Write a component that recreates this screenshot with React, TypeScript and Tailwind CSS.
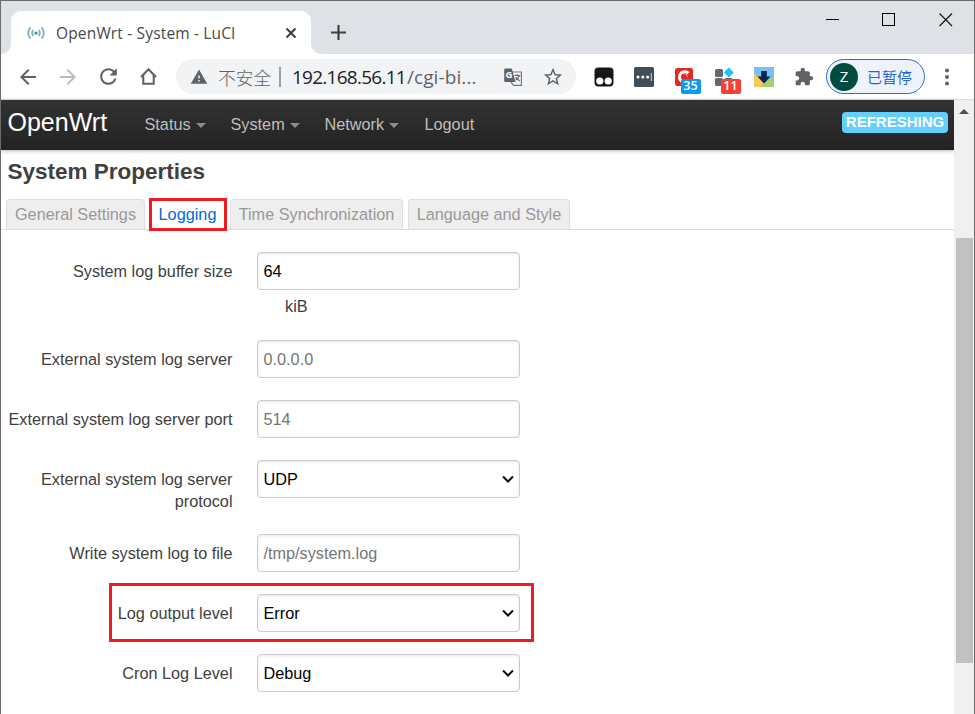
import type { ReactNode } from "react";

const uiFont = "font-['Open_Sans','Noto_Sans_CJK_SC',sans-serif]";

function Glyph({ d, className = "size-6" }: { d: string; className?: string }) {
  return (
    <svg viewBox="0 0 24 24" className={className} fill="currentColor">
      <path d={d} />
    </svg>
  );
}

function Cell({ children }: { children: ReactNode }) {
  return <div className="flex h-9 w-10 shrink-0 items-center justify-center text-[#5f6368]">{children}</div>;
}

function TabStrip() {
  return (
    <div className="flex h-[53px] shrink-0 items-end bg-[#dee1e6]">
      <div className="flex h-[43px] w-[320px] shrink-0 items-end">
        <div className="h-2.5 w-2.5 shrink-0 bg-white">
          <div className="h-2.5 w-2.5 rounded-br-[10px] bg-[#dee1e6]" />
        </div>
        <div className="flex h-[43px] w-[300px] shrink-0 items-center rounded-t-[10px] bg-white pl-[16px]">
          <svg viewBox="0 0 18 14" className="h-[14px] w-[18px] shrink-0" fill="none" stroke="#7fb0c2" strokeWidth="1.8">
            <circle cx="9" cy="7" r="1.6" fill="#46869f" stroke="none" />
            <path d="M6.4 4.2Q4 7 6.4 9.8M11.6 4.2Q14 7 11.6 9.8M3.4 1.4Q-1 7 3.4 12.6M14.6 1.4Q19 7 14.6 12.6" />
          </svg>
          <span className={`${uiFont} ml-[11px] w-[200px] shrink-0 whitespace-nowrap text-[15.5px] leading-5 tracking-[0.16px] text-[#45494d]`}>
            OpenWrt - System - LuCI
          </span>
          <svg viewBox="0 0 12 12" className="ml-[29px] size-3 shrink-0" stroke="#3c4043" strokeWidth="2" fill="none">
            <path d="M1.5 1.5l9 9M10.5 1.5l-9 9" />
          </svg>
        </div>
        <div className="h-2.5 w-2.5 shrink-0 bg-white">
          <div className="h-2.5 w-2.5 rounded-bl-[10px] bg-[#dee1e6]" />
        </div>
      </div>
      <svg viewBox="0 0 14 14" className="mb-[14px] ml-[10px] size-[15px] shrink-0" stroke="#3c4043" strokeWidth="2" fill="none">
        <path d="M7 0v14M0 7h14" />
      </svg>
      <div className="ml-auto flex h-full items-start pt-[12px] pr-[21px]">
        <svg viewBox="0 0 14 14" className="mr-[42px] size-[14px]" shapeRendering="crispEdges">
          <rect x="0" y="6" width="13" height="1" fill="#000" />
        </svg>
        <svg viewBox="0 0 14 14" className="mr-[43px] size-[14px]" shapeRendering="crispEdges">
          <rect x="0.5" y="0.5" width="12" height="12" fill="none" stroke="#000" />
        </svg>
        <svg viewBox="0 0 14 14" className="size-[14px]">
          <path d="M.5.5l12.5 12.5M13 .5L.5 13" fill="none" stroke="#111" strokeWidth="1.1" />
        </svg>
      </div>
    </div>
  );
}

function Omnibox() {
  return (
    <div className={`${uiFont} ml-2 flex h-[35px] w-[400px] shrink-0 items-center rounded-full bg-[#f1f3f4]`}>
      <Glyph
        className="ml-[14px] size-[18px] shrink-0 text-[#5f6368]"
        d="M1 21h22L12 2 1 21zm12-3h-2v-2h2v2zm0-4h-2v-4h2v4z"
      />
      <span className="ml-[10px] w-[53px] whitespace-nowrap font-['Noto_Sans_CJK_SC',sans-serif] text-[17.7px] leading-6 font-light text-[#5f6368]">
        不安全
      </span>
      <span className="ml-[8px] h-[20px] w-[2px] bg-[#9aa0a6]" />
      <span className="ml-[11px] w-[190px] whitespace-nowrap text-[19px] leading-6 text-[#5f6368]">
        <span className="tracking-[-0.75px] text-[#202124]">192.168.56.11</span>
        <span className="ml-px tracking-[0.1px]">/cgi-bi...</span>
      </span>
      <svg viewBox="0 0 20 20" className="ml-[21px] size-[20px] shrink-0">
        <path d="M8 5h10.4v13.4H10.5L8 15z" fill="#f1f3f4" stroke="#777b80" strokeWidth="1.2" />
        <path d="M2.5 1.5h6.3L12.5 15H2.5A1.3 1.3 0 011.200 13.700V2.800A1.300 1.300 0 012.500 1.500z" fill="#5f6368" />
        <text x="2.600" y="11.300" fontSize="9.500" fontWeight="700" fill="#fff">G</text>
        <path d="M11.500 8.500h5.700M14 7v1.500M16.300 8.500Q15.300 11.500 12.500 13.200M12.500 10.200l4.300 4" fill="none" stroke="#5f6368" strokeWidth="1.100" />
      </svg>
      <Glyph
        className="ml-[19px] size-[22px] shrink-0 text-[#5f6368]"
        d="M22 9.24l-7.19-.62L12 2 9.19 8.63 2 9.24l5.46 4.73L5.82 21 12 17.27 18.18 21l-1.63-7.03L22 9.24zM12 15.4l-3.76 2.27 1-4.28-3.32-2.88 4.38-.38L12 6.1l1.71 4.04 4.38.38-3.32 2.88 1 4.28L12 15.4z"
      />
    </div>
  );
}

function Badge({ color, children }: { color: string; children: string }) {
  return (
    <span
      className={`${uiFont} ${color} absolute top-[12px] left-[7px] flex h-[15px] w-[20px] items-center justify-center rounded-[2px] text-[12.500px] leading-none font-semibold text-white`}
    >
      {children}
    </span>
  );
}

function Extensions() {
  return (
    <div className="ml-[7.5px] flex shrink-0">
      <Cell>
        <svg viewBox="0 0 20 20" className="size-5">
          <rect x="0.5" y="0.5" width="19" height="19" rx="4" fill="#171717" />
          <circle cx="5.800" cy="14" r="3.600" fill="#fff" />
          <circle cx="14.200" cy="14" r="3.600" fill="#fff" />
        </svg>
      </Cell>
      <Cell>
        <svg viewBox="0 0 20 20" className="size-5">
          <rect width="20" height="20" rx="1.500" fill="#414d59" />
          <circle cx="4" cy="10" r="1.500" fill="#fff" />
          <circle cx="8.800" cy="10" r="1.500" fill="#fff" />
          <circle cx="13.600" cy="10" r="1.500" fill="#fff" />
          <rect x="16.800" y="6" width="1" height="8" fill="#d5d8db" />
        </svg>
      </Cell>
      <Cell>
        <div className="relative size-5">
          <svg viewBox="0 0 20 20" className="size-5">
            <rect x="1" y="1" width="18" height="18" rx="2.500" fill="#e6281e" />
            <path d="M14.500 6.300A5.300 5.300 0 1010 15.300" fill="none" stroke="#fff" strokeWidth="3" />
            <path d="M10 6.500a3.500 3.500 0 013.500 3.500" fill="none" stroke="#ffb4aa" strokeWidth="1" />
          </svg>
          <Badge color="bg-[#0a9bf0]">35</Badge>
        </div>
      </Cell>
      <Cell>
        <div className="relative size-5">
          <svg viewBox="0 0 20 20" className="size-5">
            <rect x="1" y="2" width="8" height="8" rx="1.500" fill="#62686d" />
            <rect x="1" y="11" width="8" height="8" rx="1.500" fill="#62686d" />
            <rect x="10.500" y="11" width="8" height="8" rx="1.500" fill="#62686d" />
            <path d="M14.800.500l5 5-5 5-5-5z" fill="#20c3f8" />
          </svg>
          <Badge color="bg-[#f44336]">11</Badge>
        </div>
      </Cell>
      <Cell>
        <svg viewBox="0 0 20 20" className="size-5">
          <rect width="20" height="20" fill="#79c2ef" />
          <path d="M0 6.500L10 16l-3 4H0z" fill="#fac858" />
          <path d="M7 20l3-4 10-6v10z" fill="#a6d268" />
          <path d="M7.200 4h5.600v5.500h3.700L10 16.500 3.500 9.500h3.700z" fill="#08254d" />
        </svg>
      </Cell>
      <Cell>
        <Glyph
          className="size-5"
          d="M20.5 11H19V7c0-1.1-.9-2-2-2h-4V3.5C13 2.12 11.88 1 10.5 1S8 2.12 8 3.5V5H4c-1.1 0-1.99.9-1.99 2v3.8H3.5c1.49 0 2.7 1.21 2.7 2.7s-1.21 2.7-2.7 2.7H2V20c0 1.1.9 2 2 2h3.8v-1.5c0-1.49 1.21-2.7 2.7-2.7 1.49 0 2.7 1.21 2.7 2.7V22H17c1.1 0 2-.9 2-2v-4h1.5c1.38 0 2.5-1.12 2.5-2.5S21.88 11 20.5 11z"
        />
      </Cell>
    </div>
  );
}

function Toolbar() {
  return (
    <div className="flex h-[46px] shrink-0 items-center border-b border-[#dadce0] bg-white pl-[7px]">
      <Cell>
        <Glyph d="M20 11H7.83l5.59-5.59L12 4l-8 8 8 8 1.41-1.41L7.83 13H20v-2z" />
      </Cell>
      <Cell>
        <Glyph className="size-6 text-[#babcbe]" d="M12 4l-1.41 1.41L16.17 11H4v2h12.170l-5.580 5.590L12 20l8-8z" />
      </Cell>
      <Cell>
        <Glyph
          className="ml-px size-[25px]"
          d="M17.65 6.35C16.2 4.9 14.21 4 12 4c-4.42 0-7.99 3.58-7.99 8s3.57 8 7.99 8c3.73 0 6.84-2.55 7.73-6h-2.08c-.82 2.33-3.04 4-5.65 4-3.31 0-6-2.69-6-6s2.69-6 6-6c1.66 0 3.14.69 4.22 1.78L13 11h7V4l-2.35 2.35z"
        />
      </Cell>
      <Cell>
        <svg viewBox="0 0 24 24" className="ml-px size-[25px]" fill="none" stroke="currentColor" strokeWidth="2">
          <path d="M4.800 12.500L12 5l7.200 7.500M7 11v8h10v-8" />
        </svg>
      </Cell>
      <Omnibox />
      <Extensions />
      <div className="ml-[2.5px] flex h-[35px] w-[99px] shrink-0 items-center rounded-full border border-[#2b6bd6] bg-[#eef2fb] pl-[3px]">
        <span className={`${uiFont} flex size-7 items-center justify-center rounded-full bg-[#004d40] text-[15px] text-white`}>
          Z
        </span>
        <span className="ml-[9px] font-['Noto_Sans_CJK_SC',sans-serif] text-[15px] leading-5 font-normal whitespace-nowrap text-[#1f67d8]">
          已暂停
        </span>
      </div>
      <div className="ml-[2px]">
        <Cell>
          <svg viewBox="0 0 4 18" className="h-[18px] w-1" fill="currentColor">
            <circle cx="2" cy="2.500" r="2" />
            <circle cx="2" cy="9" r="2" />
            <circle cx="2" cy="15.500" r="2" />
          </svg>
        </Cell>
      </div>
    </div>
  );
}

function NavItem({ label, caret, width }: { label: string; caret?: boolean; width: string }) {
  return (
    <div className={`${width} flex shrink-0 items-center whitespace-nowrap`}>
      <span>{label}</span>
      {caret && (
        <span className="mt-[3px] ml-[5px] h-0 w-0 border-x-[5px] border-t-[5px] border-x-transparent border-t-[#8d8d8d]" />
      )}
    </div>
  );
}

function Navbar() {
  return (
    <div className="flex h-[50px] shrink-0 items-center bg-linear-to-b from-[#333333] to-[#222222] pb-[2px] pl-[6.5px] text-[16.25px] leading-[22px] text-[#bfbfbf] shadow-[0_1px_4px_rgba(0,0,0,0.3)]">
      <span className="mb-[5px] w-[137px] text-[25px] leading-[30px] text-white">OpenWrt</span>
      <NavItem label="Status" caret width="w-[86px]" />
      <NavItem label="System" caret width="w-[94px]" />
      <NavItem label="Network" caret width="w-[100px]" />
      <NavItem label="Logout" width="w-[60px]" />
      <span className="mr-[6px] mb-[3px] ml-auto flex h-[21px] w-[106px] items-center justify-center rounded bg-[#62cffc] pb-[2px] text-[15px] leading-none font-bold whitespace-nowrap text-white">
        REFRESHING
      </span>
    </div>
  );
}

function PageTab({ children, width }: { children: string; width: string }) {
  return (
    <div
      className={`${width} flex h-[30px] shrink-0 items-center justify-center rounded-t border border-b-0 border-[#dddddd] bg-[#eeeeee] whitespace-nowrap text-[#999999]`}
    >
      {children}
    </div>
  );
}

type Field = { label: string; value?: string; placeholder?: string; select?: boolean; hint?: string; marked?: boolean; gap: string };

const fields: Field[] = [
  { label: "System log buffer size", value: "64", hint: "kiB", gap: "mb-[22px]" },
  { label: "External system log server", placeholder: "0.0.0.0", gap: "mb-[22px]" },
  { label: "External system log server port", placeholder: "514", gap: "mb-[22px]" },
  { label: "External system log server protocol", value: "UDP", select: true, gap: "mb-[22px]" },
  { label: "Write system log to file", placeholder: "/tmp/system.log", gap: "mb-[22px]" },
  { label: "Log output level", value: "Error", select: true, marked: true, gap: "mb-[22px]" },
  { label: "Cron Log Level", value: "Debug", select: true, gap: "mb-0" },
];

function FieldRow({ field }: { field: Field }) {
  return (
    <div className={`${field.gap} relative flex`}>
      {field.marked && <div className="absolute -top-[11px] left-[108px] h-[59px] w-[425px] border-[3px] border-[#ed1c24]" />}
      <div className="w-[231.5px] shrink-0 pt-[8px] text-right leading-[22px]">{field.label}</div>
      <div className="ml-[24.5px] w-[263px] shrink-0">
        <div className="flex h-[38px] items-center rounded-[4px] border border-[#cccccc] bg-white pr-[5px] pl-[5.500px] shadow-[inset_0_1px_3px_rgba(0,0,0,0.1)]">
          <span className={field.value ? "text-black" : "text-[#757575]"}>{field.value ?? field.placeholder}</span>
          {field.select && (
            <svg viewBox="0 0 12 8" className="ml-auto h-2 w-3" fill="none" stroke="#101010" strokeWidth="2">
              <path d="M1 1.500l5 5 5-5" />
            </svg>
          )}
        </div>
        {field.hint && <div className="pt-[5px] pb-px pl-[28px] leading-[22px]">{field.hint}</div>}
      </div>
    </div>
  );
}

function Page() {
  return (
    <div className="flex w-[953px] shrink-0 flex-col bg-white font-['Liberation_Sans',Arial,sans-serif] text-[16.250px] text-[#404040]">
      <Navbar />
      <h1 className="mt-[7px] ml-[6.500px] text-[22.500px] leading-[30px] font-bold">System Properties</h1>
      <div className="mt-[11px] flex h-[32px] items-start">
        <div className="flex h-[32px] w-full items-start bg-[linear-gradient(#dddddd,#dddddd)] bg-[length:100%_1px] bg-[position:0_31px] bg-no-repeat pt-px pl-[5px]">
          <PageTab width="w-[139px]">General Settings</PageTab>
          <div className="-mt-px mr-[3px] ml-[4px] flex h-[33px] w-[78px] shrink-0 items-center justify-center border-[3px] border-[#ed1c24] bg-white pr-px text-[#0069d6]">
            Logging
          </div>
          <PageTab width="w-[173px]">Time Synchronization</PageTab>
          <div className="w-[5px] shrink-0" />
          <PageTab width="w-[162px]">Language and Style</PageTab>
        </div>
      </div>
      <div className="mt-[22px]">
        {fields.map((field) => (
          <FieldRow key={field.label} field={field} />
        ))}
      </div>
    </div>
  );
}

function Scrollbar() {
  return (
    <div className="flex w-[20px] shrink-0 flex-col items-center bg-[#f0f0f0]">
      <div className="mt-[9px] h-0 w-0 border-x-[5px] border-b-[5px] border-x-transparent border-b-[#505050]" />
      <div className="mt-[124px] h-[425px] w-[17px] bg-[#c1c1c1]" />
    </div>
  );
}

export default function App() {
  return (
    <div className="flex h-[714px] w-[975px] flex-col overflow-hidden border-x border-t border-[#6b6b6b] bg-white">
      <TabStrip />
      <Toolbar />
      <div className="flex min-h-0 flex-1">
        <Page />
        <Scrollbar />
      </div>
    </div>
  );
}
